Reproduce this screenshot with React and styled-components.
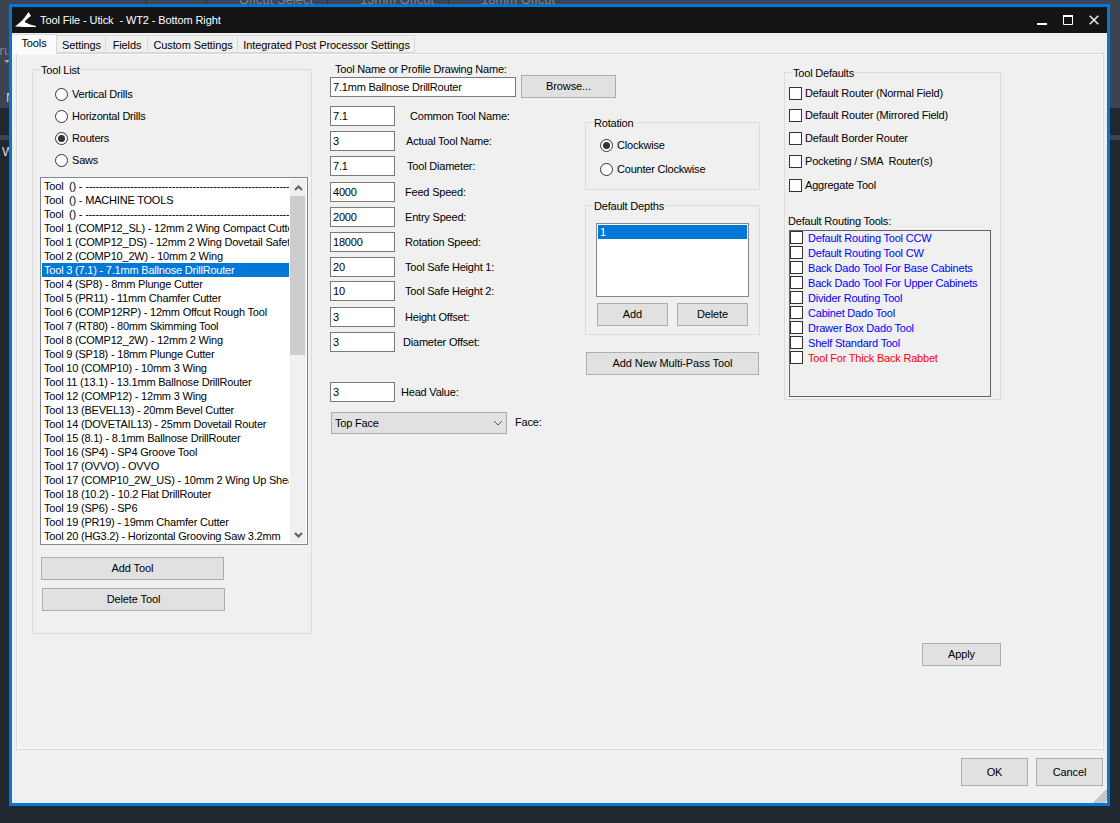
import React from "react";
import styled, { createGlobalStyle } from "styled-components";

const Global = createGlobalStyle`
  html, body { margin: 0; padding: 0; width: 1120px; height: 823px; overflow: hidden; }
  body { font-family: "Liberation Sans", Arial, sans-serif; font-size: 11px; letter-spacing: -0.2px; color: #000; }
  * { box-sizing: border-box; }
`;

const Desktop = styled.div`
  position: relative;
  width: 1120px;
  height: 823px;
  overflow: hidden;
  background: #20272e;
`;
const BackTop = styled.div`
  height: 108px;
  background: #3c4351;
  display: flex;
  padding-left: 146px;
  color: #7d8592;
  font-size: 13px;
  letter-spacing: 0;
  line-height: 1;
`;
const BackTool = styled.span`
  width: ${(p) => p.$w}px;
  height: 12px;
  overflow: hidden;
  border-left: 1px solid #2a303a;
  padding-left: ${(p) => p.$pad || 0}px;
  margin-top: -7px;
  white-space: nowrap;
`;
const BackBand = styled.div`
  height: 5px;
  margin-top: 27px;
  background: #3c4351;
`;
const BackLetter = styled.span`
  position: absolute;
  left: ${(p) => p.$x}px;
  top: ${(p) => p.$y}px;
  color: ${(p) => p.$c};
  font-size: 13px;
  letter-spacing: 0;
  line-height: 14px;
`;
const BackArrow = styled.span`
  position: absolute;
  left: 4px;
  top: 60px;
  border-left: 3px solid transparent;
  border-right: 3px solid transparent;
  border-top: 3px solid #a0a6b0;
`;

const Win = styled.div`
  position: absolute;
  left: 9px;
  top: 4px;
  width: 1101px;
  height: 802px;
  border: 3px solid #0078d7;
  background: #f0f0f0;
  display: flex;
  flex-direction: column;
`;
const TitleBar = styled.div`
  height: 26px;
  flex: none;
  background: #141414;
  color: #fff;
  display: flex;
  align-items: center;
  padding-left: 3px;
`;
const TitleText = styled.span`
  margin-left: 3px;
  font-size: 11px;
  letter-spacing: -0.1px;
  white-space: pre;
`;
const WinButtons = styled.div`
  margin-left: auto;
  display: flex;
  align-items: center;
  margin-right: 8px;
  gap: 16px;
`;
const TabStrip = styled.div`
  height: 20px;
  flex: none;
  display: flex;
  align-items: flex-end;
  position: relative;
  z-index: 1;
`;
const Tab = styled.div`
  height: ${(p) => (p.$active ? 20 : 18)}px;
  width: ${(p) => p.$w}px;
  background: ${(p) => (p.$active ? "#fbfbfb" : "#f0f0f0")};
  border: 1px solid #d9d9d9;
  border-bottom: ${(p) => (p.$active ? "none" : "1px solid #d9d9d9")};
  border-left: ${(p) => (p.$active ? "none" : "1px solid transparent")};
  margin-bottom: ${(p) => (p.$active ? -1 : 0)}px;
  text-align: center;
  line-height: ${(p) => (p.$active ? 17 : 19)}px;
  letter-spacing: -0.1px;
  white-space: nowrap;
`;
const Page = styled.div`
  margin: 0 3px 0 4px;
  height: 697px;
  flex: none;
  border: 1px solid #d9d9d9;
  box-shadow: inset 0 0 0 1px #fbfbfb;
  display: grid;
  grid-template-columns: 298px 255px 199px 1fr;
  padding: 15px 0 0 15px;
`;
const Group = styled.fieldset`
  margin: ${(p) => p.$m || "0"};
  padding: 0;
  width: ${(p) => p.$w}px;
  height: ${(p) => p.$h}px;
  border: 1px solid #dcdcdc;
  min-width: 0;
  position: relative;
`;
const Legend = styled.legend`
  margin-left: 7px;
  padding: 0 1px;
  font-size: 11px;
  line-height: 13px;
  position: relative;
  top: 1px;
`;
const RadioStack = styled.div`
  display: flex;
  flex-direction: column;
  gap: ${(p) => p.$gap}px;
  padding: ${(p) => p.$pad};
`;
const ChoiceRow = styled.label`
  display: flex;
  align-items: center;
  height: 14px;
  line-height: 14px;
  white-space: nowrap;
  gap: 4px;
`;
const Radio = styled.span`
  width: 13px;
  height: 13px;
  border: 1px solid #333;
  border-radius: 50%;
  background: #fff;
  flex: none;
  display: flex;
  align-items: center;
  justify-content: center;
  &::after {
    content: "";
    width: 7px;
    height: 7px;
    border-radius: 50%;
    background: ${(p) => (p.$on ? "#333" : "transparent")};
  }
`;
const ListBox = styled.div`
  position: relative;
  margin: ${(p) => p.$m};
  width: ${(p) => p.$w}px;
  height: ${(p) => p.$h}px;
  border: 1px solid #828790;
  background: #fff;
  padding: 1px;
  overflow: hidden;
`;
const ListRows = styled.div`
  width: ${(p) => p.$w}px;
  overflow: hidden;
`;
const ListRow = styled.div`
  height: 14px;
  line-height: 14px;
  padding-left: 2px;
  white-space: pre;
  overflow: hidden;
  background: ${(p) => (p.$sel ? "#0078d7" : "transparent")};
  color: ${(p) => (p.$sel ? "#fff" : "#000")};
`;
const Scroll = styled.div`
  position: absolute;
  right: 1px;
  top: 1px;
  bottom: 1px;
  width: 16px;
  background: #f0f0f0;
  display: flex;
  flex-direction: column;
`;
const ScrollEnd = styled.div`
  height: 17px;
  flex: none;
  display: flex;
  align-items: center;
  justify-content: center;
`;
const Thumb = styled.div`
  width: 15px;
  height: 159px;
  background: #cdcdcd;
`;
const Spring = styled.div`
  flex: 1;
`;
const Btn = styled.button`
  display: block;
  width: ${(p) => p.$w}px;
  height: ${(p) => p.$h || 23}px;
  margin: ${(p) => p.$m || "0"};
  background: #e1e1e1;
  border: 1px solid #adadad;
  border-radius: 0;
  padding: 0 0 ${(p) => (p.$h ? 0 : 1)}px;
  font: 11px "Liberation Sans", Arial, sans-serif;
  letter-spacing: -0.1px;
  color: #000;
  flex: none;
`;
const Col = styled.div`
  display: flex;
  flex-direction: column;
  align-items: flex-start;
  min-width: 0;
`;
const TopLabel = styled.div`
  margin: -6px 0 0 5px;
  height: 13px;
  line-height: 13px;
  white-space: nowrap;
`;
const NameRow = styled.div`
  display: flex;
  align-items: center;
  gap: 5px;
  height: 23px;
  margin-top: -1px;
`;
const Field = styled.div`
  width: ${(p) => p.$w}px;
  height: 20px;
  flex: none;
  border: 1px solid #7a7a7a;
  background: #fff;
  padding-left: 2px;
  line-height: 18px;
  white-space: nowrap;
`;
const FieldRows = styled.div`
  display: flex;
  flex-direction: column;
  margin-top: 8px;
`;
const FieldRow = styled.div`
  display: flex;
  align-items: center;
  height: 20px;
  margin-top: ${(p) => p.$t || 0}px;
`;
const FieldLabel = styled.span`
  margin-left: ${(p) => p.$x}px;
  margin-bottom: ${(p) => p.$b || 0}px;
  white-space: nowrap;
`;
const FaceRow = styled.div`
  display: flex;
  align-items: center;
  margin: 10px 0 0 1px;
`;
const Select = styled.div`
  width: 176px;
  height: 22px;
  background: #e1e1e1;
  border: 1px solid #adadad;
  padding-left: 3px;
  line-height: 20px;
  display: flex;
  align-items: center;
  justify-content: space-between;
`;
const Chevron = styled.svg`
  margin-right: 3px;
`;
const CheckGroupBody = styled.div`
  display: flex;
  flex-direction: column;
  padding: 0 0 0 4px;
`;
const CheckRow = styled.label`
  display: flex;
  align-items: center;
  height: 14px;
  margin-top: ${(p) => p.$t}px;
  gap: 3px;
  white-space: pre;
`;
const Box = styled.span`
  width: 13px;
  height: 13px;
  flex: none;
  border: 1px solid #333;
  background: #fff;
`;
const SubLabel = styled.div`
  margin: 22px 0 0 -1px;
  line-height: 14px;
  white-space: nowrap;
`;
const ToolBox = styled.div`
  width: 202px;
  height: 167px;
  margin-top: 2px;
  border: 1px solid #646464;
  display: flex;
  flex-direction: column;
  & > :first-child {
    margin-top: -1px;
  }
`;
const ToolRow = styled.label`
  display: flex;
  align-items: center;
  height: 15px;
  gap: 5px;
  white-space: nowrap;
  color: ${(p) => p.$c};
`;
const PairRow = styled.div`
  display: flex;
  gap: 9px;
  margin: 6px 0 0 11px;
`;
const Footer = styled.div`
  flex: 1;
  display: flex;
  justify-content: flex-end;
  align-items: flex-start;
  gap: 8px;
  padding: 8px 4px 0 0;
  position: relative;
`;
const Grip = styled.svg`
  position: absolute;
  right: 0;
  bottom: 0;
`;

const dashes = "-".repeat(62);
const tools = [
  `Tool  () - ${dashes}`,
  "Tool  () - MACHINE TOOLS",
  `Tool  () - ${dashes}`,
  "Tool 1 (COMP12_SL) - 12mm 2 Wing Compact Cutter",
  "Tool 1 (COMP12_DS) - 12mm 2 Wing Dovetail Safety",
  "Tool 2 (COMP10_2W) - 10mm 2 Wing",
  "Tool 3 (7.1) - 7.1mm Ballnose DrillRouter",
  "Tool 4 (SP8) - 8mm Plunge Cutter",
  "Tool 5 (PR11) - 11mm Chamfer Cutter",
  "Tool 6 (COMP12RP) - 12mm Offcut Rough Tool",
  "Tool 7 (RT80) - 80mm Skimming Tool",
  "Tool 8 (COMP12_2W) - 12mm 2 Wing",
  "Tool 9 (SP18) - 18mm Plunge Cutter",
  "Tool 10 (COMP10) - 10mm 3 Wing",
  "Tool 11 (13.1) - 13.1mm Ballnose DrillRouter",
  "Tool 12 (COMP12) - 12mm 3 Wing",
  "Tool 13 (BEVEL13) - 20mm Bevel Cutter",
  "Tool 14 (DOVETAIL13) - 25mm Dovetail Router",
  "Tool 15 (8.1) - 8.1mm Ballnose DrillRouter",
  "Tool 16 (SP4) - SP4 Groove Tool",
  "Tool 17 (OVVO) - OVVO",
  "Tool 17 (COMP10_2W_US) - 10mm 2 Wing Up Shear",
  "Tool 18 (10.2) - 10.2 Flat DrillRouter",
  "Tool 19 (SP6) - SP6",
  "Tool 19 (PR19) - 19mm Chamfer Cutter",
  "Tool 20 (HG3.2) - Horizontal Grooving Saw 3.2mm",
];

const fields = [
  ["7.1", "Common Tool Name:", 15, 0],
  ["3", "Actual Tool Name:", 11, 5],
  ["7.1", "Tool Diameter:", 12, 5],
  ["4000", "Feed Speed:", 10, 6],
  ["2000", "Entry Speed:", 10, 5],
  ["18000", "Rotation Speed:", 10, 5],
  ["20", "Tool Safe Height 1:", 10, 5],
  ["10", "Tool Safe Height 2:", 10, 4],
  ["3", "Height Offset:", 10, 6],
  ["3", "Diameter Offset:", 8, 5],
  ["3", "Head Value:", 6, 30],
];

const routing = [
  ["Default Routing Tool CCW", "#0000ff"],
  ["Default Routing Tool CW", "#0000ff"],
  ["Back Dado Tool For Base Cabinets", "#0000ff"],
  ["Back Dado Tool For Upper Cabinets", "#0000ff"],
  ["Divider Routing Tool", "#0000ff"],
  ["Cabinet Dado Tool", "#0000ff"],
  ["Drawer Box Dado Tool", "#0000ff"],
  ["Shelf Standard Tool", "#0000ff"],
  ["Tool For Thick Back Rabbet", "#ff0000"],
];

const defaults = [
  ["Default Router (Normal Field)", 7],
  ["Default Router (Mirrored Field)", 8],
  ["Default Border Router", 9],
  ["Pocketing / SMA  Router(s)", 9],
  ["Aggregate Tool", 10],
];

const Up = () => (
  <svg width="9" height="6" viewBox="0 0 9 6"><path d="M1 5 L4.5 1.5 L8 5" fill="none" stroke="#606060" strokeWidth="2" /></svg>
);
const Down = () => (
  <svg width="9" height="6" viewBox="0 0 9 6"><path d="M1 1 L4.5 4.5 L8 1" fill="none" stroke="#606060" strokeWidth="2" /></svg>
);

export default function App() {
  return (
    <Desktop>
      <Global />
      <BackTop>
        <BackTool $w={60}></BackTool>
        <BackTool $w={121} $pad={32}>Offcut Select</BackTool>
        <BackTool $w={121} $pad={32}>13mm Offcut</BackTool>
        <BackTool $w={121} $pad={32}>18mm Offcut</BackTool>
      </BackTop>
      <BackBand />
      <BackLetter $x={-4} $y={44} $c="#7d8592">tru</BackLetter>
      <BackArrow />
      <BackLetter $x={6} $y={91} $c="#d5d8dc">N</BackLetter>
      <BackLetter $x={2} $y={145} $c="#d5d8dc">W</BackLetter>

      <Win>
        <TitleBar>
          <svg width="22" height="18" viewBox="0 0 22 18">
            <path d="M0 15.5 C5 12 10 7 13.5 1 L16 5 C13 7 11 9 9.5 11 C13 13 17 14 21 15 L21 16 C14 16 6 16 0 15.5 Z" fill="#fff" />
          </svg>
          <TitleText>Tool File - Utick  - WT2 - Bottom Right</TitleText>
          <WinButtons>
            <svg width="10" height="10" viewBox="0 0 10 10"><rect x="0" y="8" width="10" height="2" fill="#fff" /></svg>
            <svg width="10" height="10" viewBox="0 0 10 10"><path d="M.5 1.5h9v8h-9z" fill="none" stroke="#fff" /><rect width="10" height="2" fill="#fff" /></svg>
            <svg width="10" height="10" viewBox="0 0 10 10"><path d="M.7.7l8.6 8.6M9.3.7L.7 9.3" stroke="#eee" strokeWidth="1.5" /></svg>
          </WinButtons>
        </TitleBar>
        <TabStrip>
          <Tab $active $w={45}>Tools</Tab>
          <Tab $w={49}>Settings</Tab>
          <Tab $w={42}>Fields</Tab>
          <Tab $w={90}>Custom Settings</Tab>
          <Tab $w={177}>Integrated Post Processor Settings</Tab>
        </TabStrip>
        <Page>
          <Col>
            <Group $w={280} $h={571} $m="-6px 0 0 0">
              <Legend>Tool List</Legend>
              <RadioStack $gap={8} $pad="11px 0 0 22px">
                <ChoiceRow><Radio />Vertical Drills</ChoiceRow>
                <ChoiceRow><Radio />Horizontal Drills</ChoiceRow>
                <ChoiceRow><Radio $on />Routers</ChoiceRow>
                <ChoiceRow><Radio />Saws</ChoiceRow>
              </RadioStack>
              <ListBox $m="10px 0 0 7px" $w={268} $h={368}>
                <ListRows $w={247}>
                  {tools.map((t, i) => <ListRow key={i} $sel={i === 6}>{t}</ListRow>)}
                </ListRows>
                <Scroll>
                  <ScrollEnd><Up /></ScrollEnd>
                  <Thumb />
                  <Spring />
                  <ScrollEnd><Down /></ScrollEnd>
                </Scroll>
              </ListBox>
              <Btn $w={183} $m="12px 0 0 8px">Add Tool</Btn>
              <Btn $w={183} $m="8px 0 0 9px">Delete Tool</Btn>
            </Group>
          </Col>

          <Col>
            <TopLabel>Tool Name or Profile Drawing Name:</TopLabel>
            <NameRow>
              <Field $w={186}>7.1mm Ballnose DrillRouter</Field>
              <Btn $w={95}>Browse...</Btn>
            </NameRow>
            <FieldRows>
              {fields.map(([v, l, x, t]) => (
                <FieldRow key={l} $t={t}>
                  <Field $w={65}>{v}</Field>
                  <FieldLabel $x={x}>{l}</FieldLabel>
                </FieldRow>
              ))}
            </FieldRows>
            <FaceRow>
              <Select>
                Top Face
                <Chevron width="10" height="6" viewBox="0 0 10 6"><path d="M1 1 L5 5 L9 1" fill="none" stroke="#555" strokeWidth="1" /></Chevron>
              </Select>
              <FieldLabel $x={8} $b={2}>Face:</FieldLabel>
            </FaceRow>
          </Col>

          <Col>
            <Group $w={175} $h={74} $m="47px 0 0 0">
              <Legend>Rotation</Legend>
              <RadioStack $gap={10} $pad="9px 0 0 14px">
                <ChoiceRow><Radio $on />Clockwise</ChoiceRow>
                <ChoiceRow><Radio />Counter Clockwise</ChoiceRow>
              </RadioStack>
            </Group>
            <Group $w={175} $h={136} $m="9px 0 0 0">
              <Legend>Default Depths</Legend>
              <ListBox $m="11px 0 0 10px" $w={153} $h={74}>
                <ListRow $sel>1</ListRow>
              </ListBox>
              <PairRow>
                <Btn $w={71}>Add</Btn>
                <Btn $w={71}>Delete</Btn>
              </PairRow>
            </Group>
            <Btn $w={173} $m="17px 0 0 1px">Add New Multi-Pass Tool</Btn>
          </Col>

          <Col>
            <Group $w={217} $h={334} $m="-3px 0 0 0">
              <Legend>Tool Defaults</Legend>
              <CheckGroupBody>
                {defaults.map(([l, t]) => (
                  <CheckRow key={l} $t={t}><Box />{l}</CheckRow>
                ))}
                <SubLabel>Default Routing Tools:</SubLabel>
                <ToolBox>
                  {routing.map(([l, c]) => (
                    <ToolRow key={l} $c={c}><Box />{l}</ToolRow>
                  ))}
                </ToolBox>
              </CheckGroupBody>
            </Group>
            <Btn $w={79} $m="243px 0 0 138px">Apply</Btn>
          </Col>
        </Page>
        <Footer>
          <Btn $w={67} $h={28}>OK</Btn>
          <Btn $w={67} $h={28}>Cancel</Btn>
          <Grip width="14" height="14" viewBox="0 0 14 14">
            <path d="M14 1 L1 14 M14 4 L4 14 M14 7 L7 14 M14 10 L10 14" stroke="#b0b0b0" strokeWidth="1.4" />
          </Grip>
        </Footer>
      </Win>
    </Desktop>
  );
}
